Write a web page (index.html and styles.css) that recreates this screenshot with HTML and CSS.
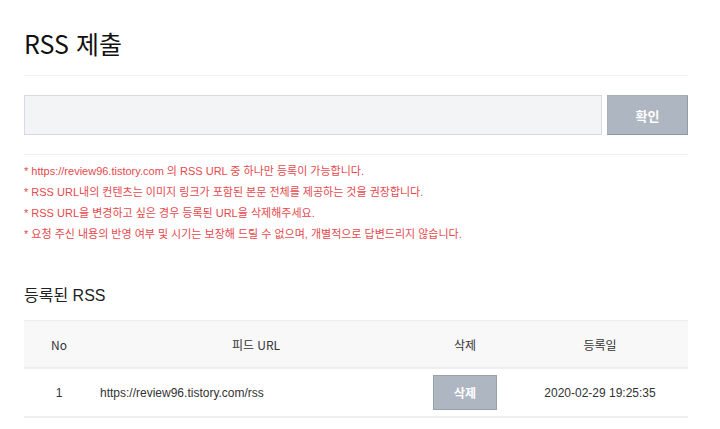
FILE: index.html
```html
<!DOCTYPE html>
<html lang="ko">
<head>
  <meta charset="UTF-8">
  <title>RSS 제출</title>
  <link rel="stylesheet" href="styles.css">
</head>
<body>
  <div class="wrap">
    <h2 class="title">RSS 제출</h2>
    <form class="submit-row" onsubmit="return false">
      <input type="text" class="url-input">
      <button class="btn btn-ok">확인</button>
    </form>
    <ul class="notice">
      <li>* https://review96.tistory.com 의 RSS URL 중 하나만 등록이 가능합니다.</li>
      <li>* RSS URL내의 컨텐츠는 이미지 링크가 포함된 본문 전체를 제공하는 것을 권장합니다.</li>
      <li>* RSS URL을 변경하고 싶은 경우 등록된 URL을 삭제해주세요.</li>
      <li>* 요청 주신 내용의 반영 여부 및 시기는 보장해 드릴 수 없으며, 개별적으로 답변드리지 않습니다.</li>
    </ul>
    <h3 class="sub-title">등록된 RSS</h3>
    <table class="rss-table">
      <thead>
        <tr><th class="col-no">No</th><th class="col-url">피드 URL</th><th class="col-del">삭제</th><th class="col-date">등록일</th></tr>
      </thead>
      <tbody>
        <tr>
          <td>1</td>
          <td class="url">https://review96.tistory.com/rss</td>
          <td><button class="btn btn-del">삭제</button></td>
          <td>2020-02-29 19:25:35</td>
        </tr>
      </tbody>
    </table>
  </div>
</body>
</html>
```

FILE: styles.css
```css
body { margin: 0; background: #fff; font-family: "Liberation Sans", Arial, "Noto Sans CJK KR", sans-serif; color: #333; }
.wrap { padding: 0 32px 0 24px; }
.title { margin: 0; padding: 26px 0 0; height: 49px; font-size: 25px; font-weight: 400; color: #111; font-family: "Noto Sans CJK KR", sans-serif; line-height: 34px; border-bottom: 1px solid #f1f1f1; }
.submit-row { display: flex; gap: 5px; padding: 19px 0 19px; margin: 0; border-bottom: 1px solid #f1f1f1; }
.url-input { flex: 1; height: 40px; box-sizing: border-box; margin: 0; background: #f3f4f6; border: 1px solid #d6dae0; }
.btn { border: 1px solid #98a2ad; background: #aeb7c1; color: #fff; font-weight: bold; font-family: "Noto Sans CJK KR", sans-serif; cursor: pointer; padding: 0; }
.btn-ok { width: 81px; height: 40px; font-size: 13px; border-color: #a7b0ba #929ca7 #8c96a1 #a7b0ba; }
.notice { list-style: none; margin: 0; padding: 6px 0 0; }
.notice li { color: #e5484d; font-size: 11px; line-height: 21px; }
.sub-title { margin: 41px 0 0; font-size: 16px; font-weight: 400; color: #222; line-height: 20px; }
.rss-table { width: 100%; border-collapse: collapse; margin-top: 14px; font-size: 12px; }
.rss-table th, .rss-table td { text-align: center; padding: 0; }
.rss-table th { background: #f8f8f8; height: 46px; font-weight: 400; border-top: 1px solid #eeeeee; border-bottom: 2px solid #eeeeee; font-family: "Noto Sans CJK KR", sans-serif; }
.rss-table td { height: 47px; border-bottom: 2px solid #eeeeee; }
.rss-table td.url { text-align: left; padding-left: 6px; }
.col-no { width: 70px; }
.col-del { width: 94px; }
.col-date { width: 176px; }
.btn-del { width: 64px; height: 35px; font-size: 12px; vertical-align: middle; }
```
